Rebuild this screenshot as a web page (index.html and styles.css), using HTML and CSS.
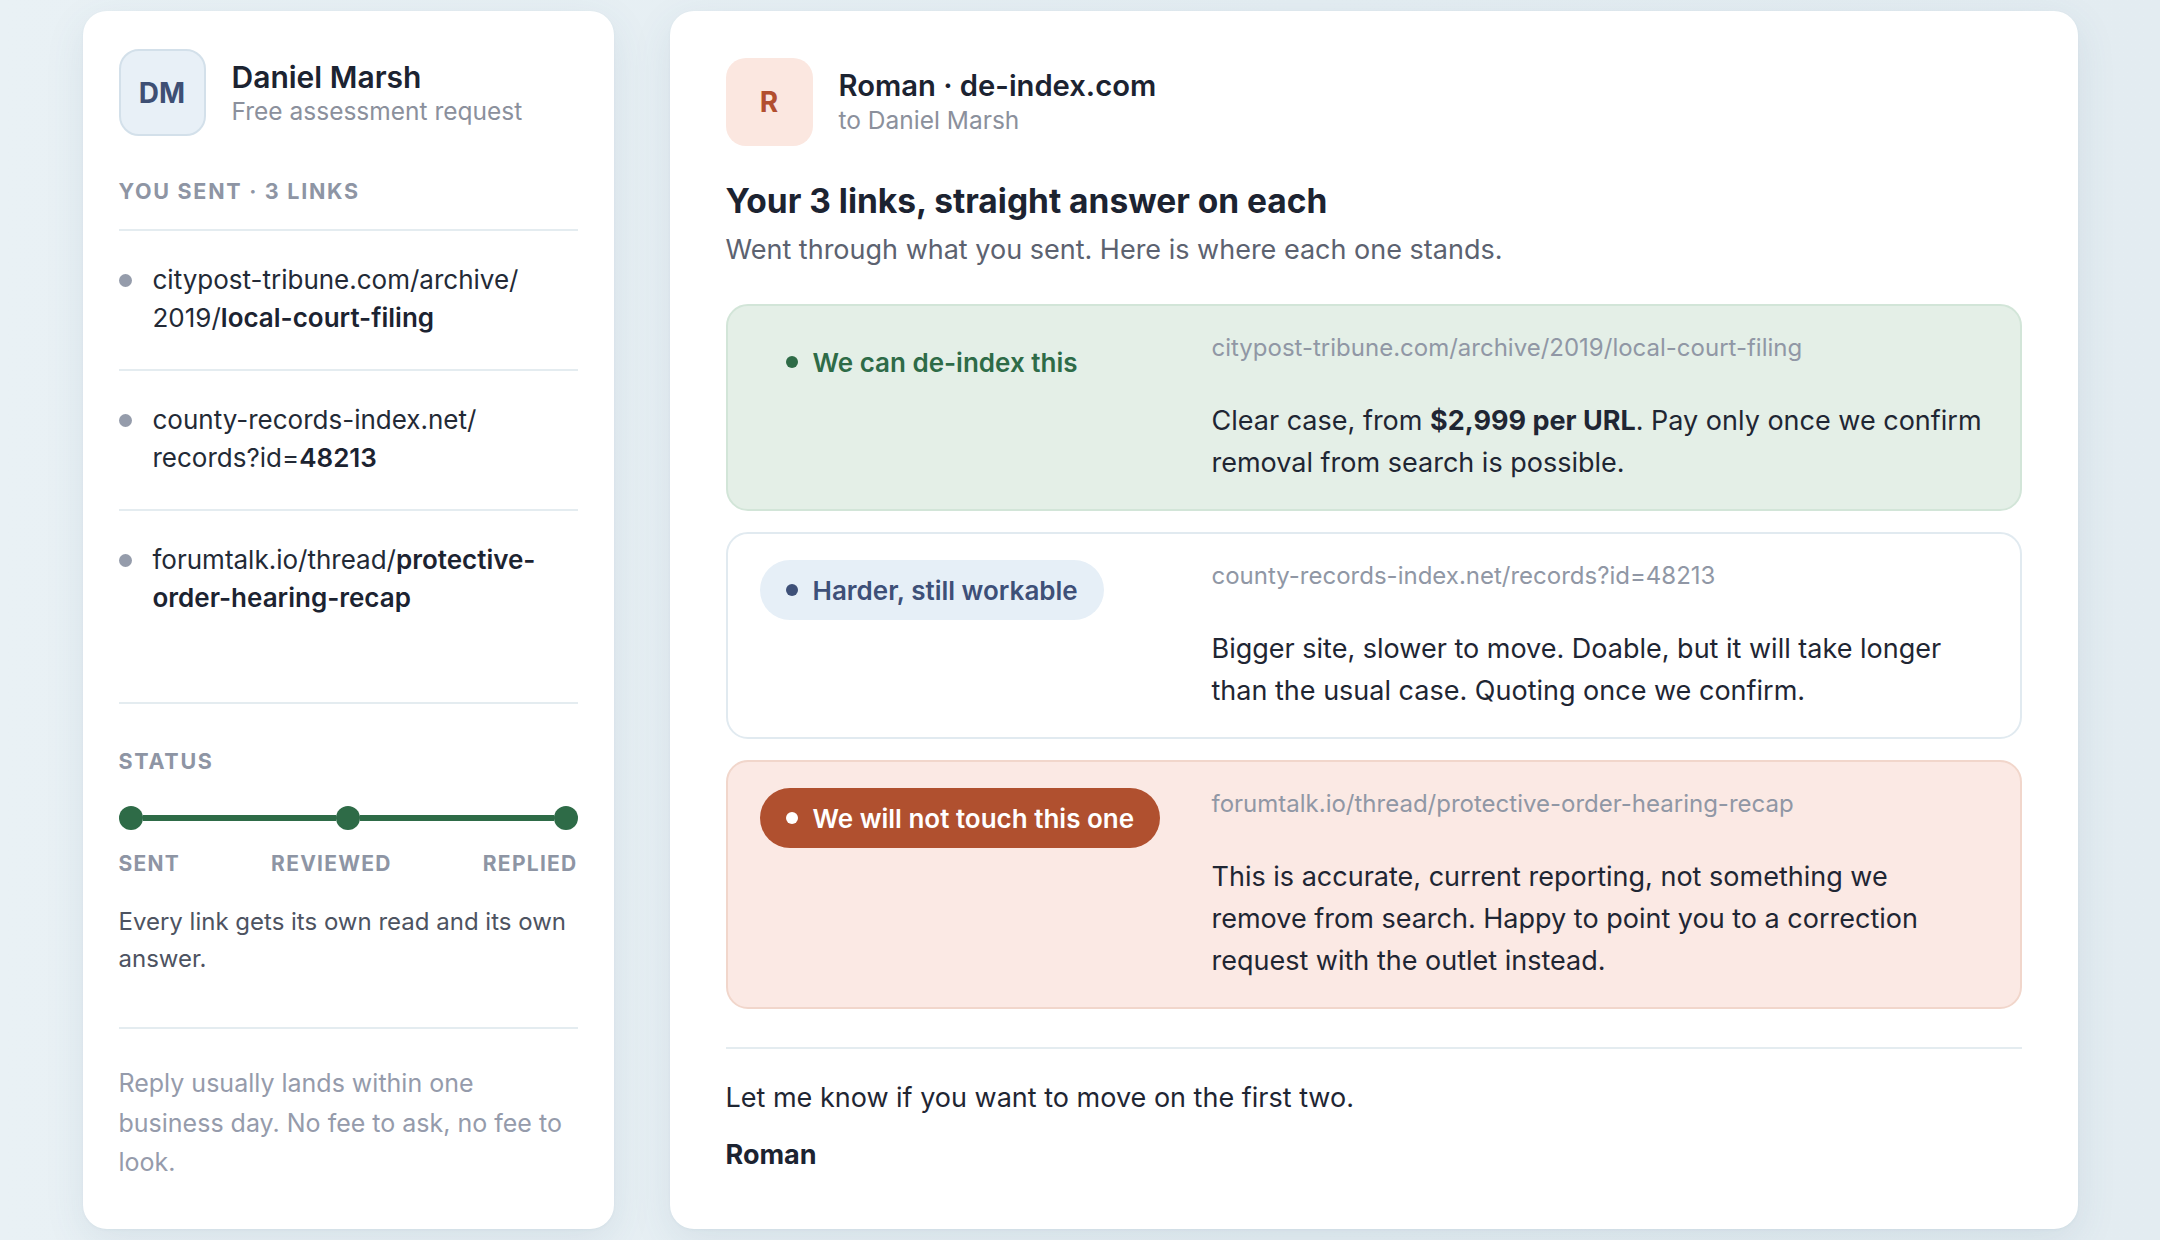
FILE: index.html
```html
<!DOCTYPE html>
<html lang="en">
<head>
<meta charset="utf-8">
<title>Roman · de-index.com</title>
<link rel="stylesheet" href="styles.css">
</head>
<body>
<div class="page">
  <aside class="card side">
    <div class="who">
      <div class="avatar avatar-dm">DM</div>
      <div class="who-text">
        <div class="who-name">Daniel Marsh</div>
        <div class="who-sub">Free assessment request</div>
      </div>
    </div>
    <div class="label label-sent">YOU SENT · 3 LINKS</div>
    <ul class="links">
      <li class="link"><span class="bullet"></span><span class="link-text">citypost-tribune.com/archive/<br>2019/<b>local-court-filing</b></span></li>
      <li class="link"><span class="bullet"></span><span class="link-text">county-records-index.net/<br>records?id=<b>48213</b></span></li>
      <li class="link"><span class="bullet"></span><span class="link-text">forumtalk.io/thread/<b>protective-<br>order-hearing-recap</b></span></li>
    </ul>
    <section class="status">
      <div class="label">STATUS</div>
      <div class="track">
        <span class="track-dot"></span>
        <span class="track-line"></span>
        <span class="track-dot"></span>
        <span class="track-line"></span>
        <span class="track-dot"></span>
      </div>
      <div class="track-labels">
        <span>SENT</span><span>REVIEWED</span><span>REPLIED</span>
      </div>
      <p class="status-note">Every link gets its own read and its own answer.</p>
    </section>
    <p class="side-foot">Reply usually lands within one business day. No fee to ask, no fee to look.</p>
  </aside>

  <main class="card mail">
    <div class="who">
      <div class="avatar avatar-r">R</div>
      <div class="who-text">
        <div class="who-name who-name-mail">Roman · de-index.com</div>
        <div class="who-sub">to Daniel Marsh</div>
      </div>
    </div>
    <h1 class="mail-title">Your 3 links, straight answer on each</h1>
    <p class="mail-lead">Went through what you sent. Here is where each one stands.</p>

    <div class="answers">
      <div class="answer answer-yes">
        <div class="answer-badge"><span class="pill pill-yes"><span class="pill-dot"></span>We can de-index this</span></div>
        <div class="answer-body">
          <div class="answer-url">citypost-tribune.com/archive/2019/local-court-filing</div>
          <p class="answer-text">Clear case, from <b>$2,999 per URL</b>. Pay only once we confirm removal from search is possible.</p>
        </div>
      </div>
      <div class="answer answer-maybe">
        <div class="answer-badge"><span class="pill pill-maybe"><span class="pill-dot"></span>Harder, still workable</span></div>
        <div class="answer-body">
          <div class="answer-url">county-records-index.net/records?id=48213</div>
          <p class="answer-text">Bigger site, slower to move. Doable, but it will take longer than the usual case. Quoting once we confirm.</p>
        </div>
      </div>
      <div class="answer answer-no">
        <div class="answer-badge"><span class="pill pill-no"><span class="pill-dot"></span>We will not touch this one</span></div>
        <div class="answer-body">
          <div class="answer-url">forumtalk.io/thread/protective-order-hearing-recap</div>
          <p class="answer-text">This is accurate, current reporting, not something we remove from search. Happy to point you to a correction request with the outlet instead.</p>
        </div>
      </div>
    </div>

    <div class="mail-foot">
      <p class="mail-close">Let me know if you want to move on the first two.</p>
      <p class="mail-sign">Roman</p>
    </div>
  </main>
</div>
</body>
</html>
```

FILE: styles.css
```css
* { box-sizing: border-box; }

html, body {
  margin: 0;
  padding: 0;
}

body {
  font-family: Inter, "Noto Sans", "Liberation Sans", sans-serif;
  color: #1c2331;
  background: linear-gradient(90deg, #e9f1f5 0%, #e4edf2 60%, #e3ecf1 100%);
  height: 1240px;
  overflow: hidden;
}

.page {
  display: grid;
  grid-template-columns: 531px 1408px;
  column-gap: 56px;
  justify-content: center;
  padding: 11px 0;
  height: 1240px;
}

.card {
  background: #ffffff;
  border-radius: 24px;
  box-shadow: 0 12px 40px rgba(60, 100, 130, 0.10), 0 1px 3px rgba(60, 100, 130, 0.05);
}

/* ---------- side card ---------- */
.side {
  padding: 38px 36px 0;
  display: flex;
  flex-direction: column;
}

.who {
  display: flex;
  align-items: center;
  gap: 26px;
}

.avatar {
  width: 87px;
  height: 87px;
  border-radius: 20px;
  display: flex;
  align-items: center;
  justify-content: center;
  font-weight: 700;
  font-size: 28px;
  flex: none;
}

.avatar-dm {
  background: #e8f0f7;
  border: 2px solid #d3e0ea;
  color: #3e4f74;
}

.avatar-r {
  background: #fbe7e0;
  color: #b24f2f;
  height: 88px;
}

.who-name {
  font-size: 30px;
  line-height: 36px;
  font-weight: 600;
  color: #1c2331;
}

.who-name-mail {
  font-size: 29.2px;
}

.who-sub {
  font-size: 24.5px;
  line-height: 32px;
  color: #8b909c;
}

.label {
  font-size: 21.5px;
  line-height: 26px;
  font-weight: 700;
  letter-spacing: 0.08em;
  color: #8e95a4;
}

.label-sent {
  margin-top: 42px;
  margin-bottom: 25px;
}

.links {
  list-style: none;
  margin: 0;
  padding: 0;
}

.link {
  display: flex;
  align-items: flex-start;
  border-top: 2px solid #e4ecf0;
  padding: 30px 0 32px;
}

.bullet {
  width: 13px;
  height: 13px;
  border-radius: 50%;
  background: #959cab;
  flex: none;
  margin-top: 13px;
  margin-right: 21px;
}

.link-text {
  font-size: 26px;
  line-height: 38px;
  color: #232a36;
}

.link-text b {
  font-weight: 600;
  color: #1c2331;
}

.status {
  margin-top: 53px;
  border-top: 2px solid #e4ecf0;
  padding-top: 44px;
}

.track {
  display: flex;
  align-items: center;
  margin-top: 32px;
  height: 24px;
}

.track-dot {
  width: 24px;
  height: 24px;
  border-radius: 50%;
  background: #2e6b47;
  flex: none;
}

.track-line {
  flex: 1;
  height: 6px;
  background: #2e6b47;
}

.track-labels {
  display: flex;
  justify-content: space-between;
  margin-top: 21px;
  font-size: 21px;
  line-height: 26px;
  font-weight: 700;
  letter-spacing: 0.06em;
  color: #8e95a4;
}

.status-note {
  margin: 26px 0 0;
  font-size: 24px;
  line-height: 37px;
  color: #4d5361;
  padding-bottom: 50px;
  border-bottom: 2px solid #e4ecf0;
}

.side-foot {
  margin: 35px 0 0;
  font-size: 25px;
  line-height: 39.5px;
  color: #959bab;
}

/* ---------- mail card ---------- */
.mail {
  padding: 47px 56px 0;
}

.mail-title {
  margin: 35px 0 0;
  font-size: 33.5px;
  line-height: 40px;
  font-weight: 700;
  color: #1c2331;
}

.mail-lead {
  margin: 11px 0 0;
  font-size: 27px;
  line-height: 36px;
  color: #5c6270;
}

.answers {
  margin-top: 36px;
  display: flex;
  flex-direction: column;
  gap: 21px;
}

.answer {
  display: grid;
  grid-template-columns: 412px 774px;
  column-gap: 40px;
  align-items: start;
  border: 2px solid #e1eaf0;
  border-radius: 22px;
  padding: 26px 32px 25px;
}

.answer-yes {
  background: #e4efe7;
  border-color: #d2e5d8;
}

.answer-maybe {
  background: #ffffff;
  border-color: #e1eaf0;
}

.answer-no {
  background: #fbe9e4;
  border-color: #f1d6cb;
}

.pill {
  display: inline-flex;
  align-items: center;
  height: 60px;
  padding: 0 26px;
  border-radius: 30px;
  font-size: 26px;
  font-weight: 600;
  white-space: nowrap;
}

.pill-dot {
  width: 12px;
  height: 12px;
  border-radius: 50%;
  background: currentColor;
  margin-right: 15px;
  flex: none;
}

.pill-yes {
  color: #2e6b47;
}

.pill-maybe {
  background: #e6eff7;
  color: #3e5078;
}

.pill-no {
  background: #b0502f;
  color: #ffffff;
}

.answer-url {
  font-size: 24px;
  line-height: 32px;
  color: #9097a5;
}

.answer-text {
  margin: 36px 0 0;
  font-size: 27px;
  line-height: 42px;
  color: #1f2633;
}

.answer-text b {
  font-weight: 700;
}

.mail-foot {
  margin-top: 38px;
  border-top: 2px solid #e4ecf0;
  padding-top: 31px;
}

.mail-close {
  margin: 0;
  font-size: 27px;
  line-height: 36px;
  color: #1f2633;
}

.mail-sign {
  margin: 21px 0 0;
  font-size: 27px;
  line-height: 36px;
  font-weight: 700;
  color: #1c2331;
}
```
